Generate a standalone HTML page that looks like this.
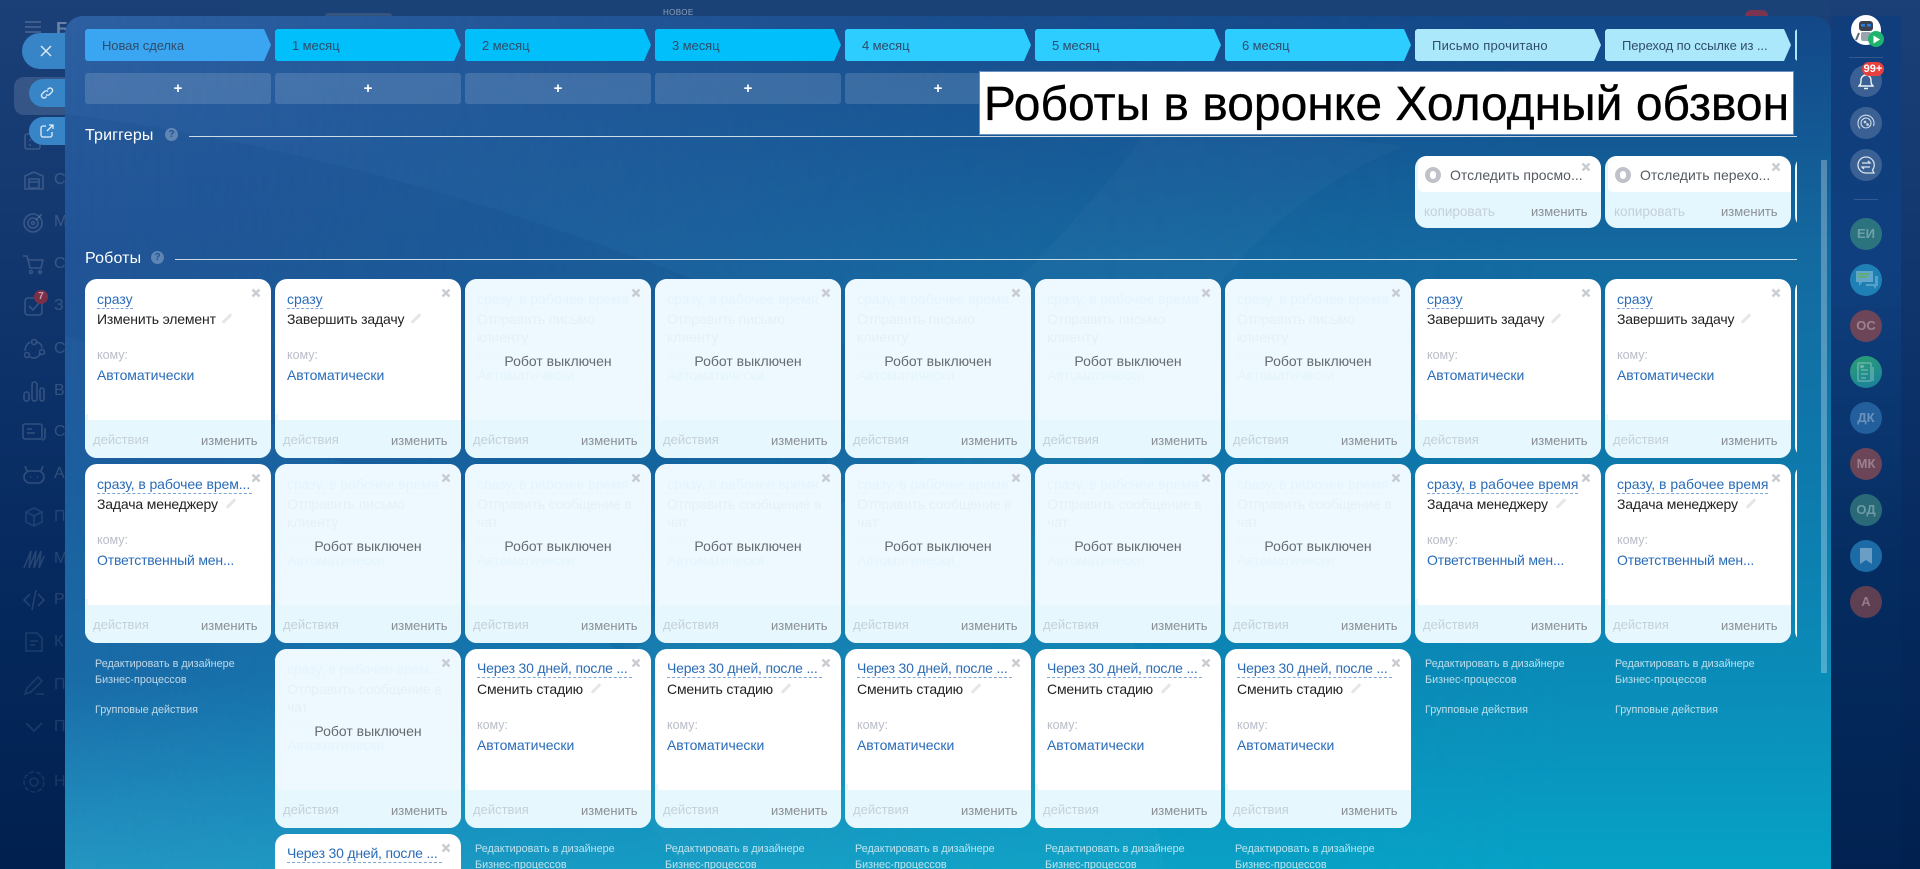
<!DOCTYPE html>
<html lang="ru"><head><meta charset="utf-8"><title>Роботы в воронке</title>
<style>
*{box-sizing:border-box}
html,body{margin:0;padding:0;width:1920px;height:869px;overflow:hidden;background:#0a2a5c;font-family:"Liberation Sans",sans-serif}
.abs,.abs>*{position:absolute}
#bg{left:0;top:0;width:1920px;height:869px;background:linear-gradient(180deg,#1b3f77 0,#153a72 20%,#0a2f66 50%,#04275a 75%,#01204f 100%)}
#rail{left:1831px;top:16px;width:70px;height:853px;background:linear-gradient(180deg,#103e7c 0,#0f3f7e 30%,#052c60 65%,#012251 100%)}
.nt{color:rgba(255,255,255,.16);font-size:16px;left:54px;line-height:20px}
.ni{left:22px;width:24px;height:24px;fill:none;stroke:rgba(255,255,255,.16);stroke-width:1.6}
.pill{background:#3784c6;border-radius:18px 0 0 18px}
#panel{left:65px;top:16px;width:1766px;height:853px;border-radius:18px 18px 0 0;overflow:hidden;background:linear-gradient(180deg,#2d60a2 0,#25589a 28%,#1c5f9f 55%,#1a6ca8 78%,#2088bb 92%,#2596c2 100%)}
#panel .rt{position:absolute;left:0;top:0;width:1766px;height:853px;background:linear-gradient(180deg,#134788 0,#136aa0 28%,#0d7cae 58%,#0a8eb9 80%,#06a2c6 100%);-webkit-mask-image:linear-gradient(90deg,rgba(0,0,0,0) 0,rgba(0,0,0,.75) 50%,#000 85%);mask-image:linear-gradient(90deg,rgba(0,0,0,0) 0,rgba(0,0,0,.75) 50%,#000 85%)}
#panel svg{position:absolute;left:0;top:0}
#clip{left:0;top:0;width:1797px;height:869px;overflow:hidden}
.s{top:29px;width:186px;height:32px;color:#2f4d6b;font-size:13px;line-height:33px;padding-left:17px;white-space:nowrap;clip-path:polygon(2px 0,179px 0,186px 16px,179px 32px,2px 32px,0 30px,0 2px);letter-spacing:-.08px}
.a{background:#3aa6f2}.b{background:#00bffa}.g{background:#2ecdff}.w{background:#ace8fc}
.p{top:73px;width:186px;height:31px;border-radius:3px;background:rgba(255,255,255,.14);color:#fff;font-size:15px;font-weight:bold;line-height:31px;text-align:center}
.h{color:#fff;font-size:16px;line-height:20px;left:85px;letter-spacing:.15px}
.q{width:13px;height:13px;border-radius:50%;background:rgba(255,255,255,.28);color:#1d5596;font-size:10px;font-weight:bold;line-height:13px;text-align:center}
.r{height:1px;left:0;background:rgba(255,255,255,.78)}
.c{position:absolute;width:186px;height:179px;border-radius:12px;background:#fff;overflow:hidden;font-size:14px;white-space:nowrap}
.c>*{position:absolute;line-height:18px}
.t{left:12px;top:11px;color:#2a6cb8;border-bottom:1px dashed #7fa6d6;height:19px}
.tl{width:155px;letter-spacing:-.1px}
.n{left:12px;top:31px;color:#222;letter-spacing:-.16px}
.n2{left:12px;top:49px;color:#222}
.pn{width:12px;height:3px;background:#e6e6e6;transform:rotate(-45deg);top:38px}
.k{left:12px;top:67px;color:#b8bdc8;font-size:12.5px}
.l{left:12px;top:87px;color:#2a6cb8;letter-spacing:-.05px}
.x{left:165px;top:8px;width:12px;height:12px;z-index:3}
.f{left:0;right:0;top:141px;height:38px;background:#e6f7fe;z-index:2}
.f:before{content:"";position:absolute;left:0;top:-6px;width:3px;height:6px;background:#e6f7fe}
.d{position:absolute;left:8px;top:11px;color:#c5d0d8;font-size:13px;line-height:18px}
.e{position:absolute;left:116px;top:12px;color:#8b8f94;font-size:13px;line-height:18px}
.o{left:0;top:0;right:0;bottom:0;background:rgba(236,249,255,.96);z-index:1}
.m{left:0;right:0;top:73px;text-align:center;color:#666b70;z-index:2}
.tr{height:72px;top:156px;background:#e4f6fe}
.tr .in{left:3px;right:0;top:0;height:36px;background:#fff;border-radius:0 0 0 5px}
.tr .ic{left:10px;top:11px;width:16px;height:16px;border-radius:50%;background:#bfc3c9}
.tr .ic:after{content:"";position:absolute;left:5px;top:4px;width:6px;height:8px;border-radius:3px;background:#fff}
.tr .tx{left:35px;top:10px;color:#555b60}
.tr .d{left:9px;top:47px;line-height:18px;font-size:13.5px}
.tr .e{left:116px;top:47px}
.tr .x{top:5px}
.lk{position:absolute;font-size:10.8px;line-height:16px;color:rgba(255,255,255,.72);white-space:nowrap;height:16px;overflow:hidden}
.v{width:32px;height:32px;left:1850px;border-radius:50%;color:rgba(255,255,255,.32);font-size:13px;font-weight:bold;line-height:32px;text-align:center}
#title{left:979px;top:71px;width:815px;height:64px;background:#fff;border:1px solid #6b8fc0;color:#000;font-size:48px;line-height:66px;text-align:center;white-space:nowrap;-webkit-text-stroke:.35px #000;overflow:hidden}
</style></head><body>
<svg width="0" height="0" style="position:absolute"><defs><g id="X"><path d="M2.500 2.500L9.500 9.500M9.500 2.500L2.500 9.500" stroke="#c9cdd2" stroke-width="2.400" fill="none"/></g></defs></svg>
<div class="abs" style="left:0;top:0;width:1920px;height:869px;overflow:hidden">
<div id="bg"></div>
<div style="left:240px;top:0;width:1590px;height:16px;background:#1b4277"></div>
<div style="left:325px;top:13px;width:67px;height:3px;border-radius:3px 3px 0 0;background:#33557f"></div>
<div style="left:663px;top:8px;font-size:8px;line-height:10px;color:#8ca0bb;letter-spacing:.4px">НОВОЕ</div>
<div style="left:1745px;top:10px;width:23px;height:6px;border-radius:7px 7px 0 0;background:#7a3450"></div>
<div id="rail"></div>
<div style="left:14px;top:77px;width:70px;height:38px;border-radius:10px;background:rgba(255,255,255,.13)"></div>
<svg class="ni" style="top:19px;left:25px;width:16px;height:16px;stroke-width:2" viewBox="0 0 16 16"><path d="M0 3H16M0 8H16M0 13H16"/></svg>
<div class="nt" style="top:19px;left:56px;font-weight:bold;font-size:18px;color:rgba(255,255,255,.35)">Б</div>
<svg class="ni" style="top:128px" viewBox="0 0 24 24"><rect x="3" y="6" width="15" height="15" rx="2"/><path d="M7 12h2M7 17h2"/></svg>
<svg class="ni" style="top:168px" viewBox="0 0 24 24"><path d="M3 8l9-4 9 4v13H3zM7 11h10v9H7zM7 14h10"/></svg>
<svg class="ni" style="top:210px" viewBox="0 0 24 24"><circle cx="11" cy="13" r="9"/><circle cx="11" cy="13" r="5"/><circle cx="11" cy="13" r="1.500"/><path d="M14 10l6-6"/></svg>
<svg class="ni" style="top:252px" viewBox="0 0 24 24"><path d="M1 4h4l3 12h11l2-8H6"/><circle cx="9" cy="20" r="1.500"/><circle cx="18" cy="20" r="1.500"/></svg>
<svg class="ni" style="top:294px" viewBox="0 0 24 24"><rect x="3" y="4" width="17" height="17" rx="3"/><path d="M7 12l4 4 6-7"/></svg>
<svg class="ni" style="top:337px" viewBox="0 0 24 24"><circle cx="12" cy="5" r="2.500"/><circle cx="5" cy="18" r="2.500"/><circle cx="20" cy="15" r="2.500"/><path d="M8 5c-3 2-5 5-5 9M8 20c3 2 8 1 10-3M20 11c0-3-2-5-5-6"/></svg>
<svg class="ni" style="top:379px" viewBox="0 0 24 24"><rect x="2" y="13" width="5" height="9" rx="2.500"/><rect x="10" y="3" width="5" height="19" rx="2.500"/><rect x="18" y="9" width="4" height="13" rx="2"/></svg>
<svg class="ni" style="top:420px" viewBox="0 0 24 24"><rect x="1" y="4" width="19" height="15" rx="2"/><path d="M23 8v9a3 3 0 0 1-3 3M5 9h5M5 13h8"/></svg>
<svg class="ni" style="top:462px" viewBox="0 0 24 24"><rect x="2" y="9" width="20" height="12" rx="6"/><path d="M5 9L3 4M19 9l2-5M8 15h1M15 15h1"/></svg>
<svg class="ni" style="top:505px;stroke:rgba(255,255,255,.1)" viewBox="0 0 24 24"><path d="M12 3l8 4v10l-8 4-8-4V7zM4 7l8 4 8-4M12 11v10"/></svg>
<svg class="ni" style="top:547px;stroke:rgba(255,255,255,.13)" viewBox="0 0 24 24"><path d="M2 21L9 4 7 21 14 4l-2 17L19 4l-2 17 5-12"/></svg>
<svg class="ni" style="top:588px;stroke:rgba(255,255,255,.12)" viewBox="0 0 24 24"><path d="M8 6l-6 6 6 6M16 6l6 6-6 6M14 2L10 22"/></svg>
<svg class="ni" style="top:630px;stroke:rgba(255,255,255,.1)" viewBox="0 0 24 24"><path d="M4 3h11l5 5v13H4zM8 11h8M8 15h5"/></svg>
<svg class="ni" style="top:673px;stroke:rgba(255,255,255,.1)" viewBox="0 0 24 24"><path d="M3 21l2-6L16 4l4 4L9 19zM14 21h8"/></svg>
<svg class="ni" style="top:715px;stroke:rgba(255,255,255,.1)" viewBox="0 0 24 24"><path d="M4 8l8 8 8-8"/></svg>
<svg class="ni" style="top:770px;stroke:rgba(255,255,255,.09)" viewBox="0 0 24 24"><circle cx="12" cy="12" r="4"/><circle cx="12" cy="12" r="10" stroke-dasharray="5 2"/></svg>
<div class="nt" style="top:170px">С</div><div class="nt" style="top:212px">М</div><div class="nt" style="top:254px">С</div><div class="nt" style="top:296px">З</div><div class="nt" style="top:339px">С</div><div class="nt" style="top:381px">В</div><div class="nt" style="top:422px">С</div><div class="nt" style="top:464px">А</div><div class="nt" style="top:507px;opacity:.7">П</div><div class="nt" style="top:549px;opacity:.8">М</div><div class="nt" style="top:590px;opacity:.8">Р</div><div class="nt" style="top:632px;opacity:.7">К</div><div class="nt" style="top:675px;opacity:.7">П</div><div class="nt" style="top:717px;opacity:.7">П</div><div class="nt" style="top:772px;opacity:.6">Н</div>
<div style="left:34px;top:290px;width:14px;height:14px;border-radius:50%;background:#7b3048;color:rgba(255,255,255,.55);font-size:10px;font-weight:bold;line-height:14px;text-align:center">7</div>

<div class="pill" style="left:22px;top:33px;width:60px;height:36px"></div>
<svg style="left:40px;top:45px" width="12" height="12" viewBox="0 0 12 12"><path d="M1 1L11 11M11 1L1 11" stroke="#dfeaf5" stroke-width="1.400" fill="none"/></svg>
<div class="pill" style="left:29px;top:79px;width:50px;height:28px"></div>
<svg style="left:40px;top:86px" width="14" height="14" viewBox="0 0 14 14" fill="none" stroke="#e2edf7" stroke-width="1.300"><path d="M6 8.500a2.500 2.500 0 0 0 3.500 0l2.500-2.500a2.500 2.500 0 0 0-3.500-3.500L7.500 3.500M8 5.500a2.500 2.500 0 0 0-3.500 0L2 8a2.500 2.500 0 0 0 3.500 3.500L6.500 10.500"/></svg>
<div class="pill" style="left:29px;top:117px;width:50px;height:28px"></div>
<svg style="left:40px;top:124px" width="14" height="14" viewBox="0 0 14 14" fill="none" stroke="#e2edf7" stroke-width="1.300"><path d="M6 2H3a2 2 0 0 0-2 2v7a2 2 0 0 0 2 2h7a2 2 0 0 0 2-2V8M7 7l6-6M9 1h4v4"/></svg>

<div id="panel">
<div class="rt"></div>
<svg width="1766" height="853" viewBox="0 0 1766 853"><path d="M0 98C250 130 480 200 720 300 800 335 860 375 910 420 760 480 680 560 560 640 400 520 180 370 0 320Z" fill="#0b3f80" opacity=".14"/><path d="M1090 105C1000 230 820 400 720 480 620 570 560 620 500 700L620 853H1100C1060 640 1050 480 1110 340 1160 240 1240 170 1340 130Z" fill="#fff" opacity=".025"/></svg>
<div style="position:absolute;left:1756px;top:144px;width:6px;height:513px;background:rgba(255,255,255,.28)"></div>
</div>

<div id="clip" class="abs">
<div class="s a" style="left:85px">Новая сделка</div>
<div class="s b" style="left:275px">1 месяц</div>
<div class="s b" style="left:465px">2 месяц</div>
<div class="s b" style="left:655px">3 месяц</div>
<div class="s g" style="left:845px">4 месяц</div>
<div class="s g" style="left:1035px">5 месяц</div>
<div class="s g" style="left:1225px">6 месяц</div>
<div class="s w" style="left:1415px;letter-spacing:.22px">Письмо прочитано</div>
<div class="s w" style="left:1605px">Переход по ссылке из ...</div>
<div class="s w" style="left:1795px"></div>
<div class="p" style="left:85px">+</div><div class="p" style="left:275px">+</div><div class="p" style="left:465px">+</div><div class="p" style="left:655px">+</div><div class="p" style="left:845px">+</div>
<div class="h" style="top:126px">Триггеры</div><div class="q" style="left:165px;top:128px">?</div><div class="r" style="left:189px;top:136px;width:1608px"></div>
<div class="h" style="top:249px">Роботы</div><div class="q" style="left:151px;top:251px">?</div><div class="r" style="left:175px;top:259px;width:1622px"></div>
<div id="title">Роботы в воронке Холодный обзвон</div>

<div class="c tr" style="left:1415px"><div class="in"></div><div class="ic"></div><div class="tx">Отследить просмо...</div><svg class="x" viewBox="0 0 12 12"><use href="#X"/></svg><span class="d">копировать</span><span class="e">изменить</span></div>
<div class="c tr" style="left:1605px"><div class="in"></div><div class="ic"></div><div class="tx">Отследить перехо...</div><svg class="x" viewBox="0 0 12 12"><use href="#X"/></svg><span class="d">копировать</span><span class="e">изменить</span></div>
<div class="c tr" style="left:1795px"></div>

<!-- row A -->
<div class="c" style="left:85px;top:279px"><span class="t">сразу</span><span class="n">Изменить элемент</span><i class="pn" style="left:136px"></i><span class="k">кому:</span><span class="l">Автоматически</span><svg class="x" viewBox="0 0 12 12"><use href="#X"/></svg><div class="f"><span class="d">действия</span><span class="e">изменить</span></div></div>
<div class="c" style="left:275px;top:279px"><span class="t">сразу</span><span class="n">Завершить задачу</span><i class="pn" style="left:135px"></i><span class="k">кому:</span><span class="l">Автоматически</span><svg class="x" viewBox="0 0 12 12"><use href="#X"/></svg><div class="f"><span class="d">действия</span><span class="e">изменить</span></div></div>
<div class="c" style="left:465px;top:279px"><span class="t">сразу, в рабочее время</span><span class="n">Отправить письмо</span><span class="n2">клиенту</span><span class="k">кому:</span><span class="l">Автоматически</span><div class="o"></div><span class="m">Робот выключен</span><svg class="x" viewBox="0 0 12 12"><use href="#X"/></svg><div class="f"><span class="d">действия</span><span class="e">изменить</span></div></div>
<div class="c" style="left:655px;top:279px"><span class="t">сразу, в рабочее время</span><span class="n">Отправить письмо</span><span class="n2">клиенту</span><span class="k">кому:</span><span class="l">Автоматически</span><div class="o"></div><span class="m">Робот выключен</span><svg class="x" viewBox="0 0 12 12"><use href="#X"/></svg><div class="f"><span class="d">действия</span><span class="e">изменить</span></div></div>
<div class="c" style="left:845px;top:279px"><span class="t">сразу, в рабочее время</span><span class="n">Отправить письмо</span><span class="n2">клиенту</span><span class="k">кому:</span><span class="l">Автоматически</span><div class="o"></div><span class="m">Робот выключен</span><svg class="x" viewBox="0 0 12 12"><use href="#X"/></svg><div class="f"><span class="d">действия</span><span class="e">изменить</span></div></div>
<div class="c" style="left:1035px;top:279px"><span class="t">сразу, в рабочее время</span><span class="n">Отправить письмо</span><span class="n2">клиенту</span><span class="k">кому:</span><span class="l">Автоматически</span><div class="o"></div><span class="m">Робот выключен</span><svg class="x" viewBox="0 0 12 12"><use href="#X"/></svg><div class="f"><span class="d">действия</span><span class="e">изменить</span></div></div>
<div class="c" style="left:1225px;top:279px"><span class="t">сразу, в рабочее время</span><span class="n">Отправить письмо</span><span class="n2">клиенту</span><span class="k">кому:</span><span class="l">Автоматически</span><div class="o"></div><span class="m">Робот выключен</span><svg class="x" viewBox="0 0 12 12"><use href="#X"/></svg><div class="f"><span class="d">действия</span><span class="e">изменить</span></div></div>
<div class="c" style="left:1415px;top:279px"><span class="t">сразу</span><span class="n">Завершить задачу</span><i class="pn" style="left:135px"></i><span class="k">кому:</span><span class="l">Автоматически</span><svg class="x" viewBox="0 0 12 12"><use href="#X"/></svg><div class="f"><span class="d">действия</span><span class="e">изменить</span></div></div>
<div class="c" style="left:1605px;top:279px"><span class="t">сразу</span><span class="n">Завершить задачу</span><i class="pn" style="left:135px"></i><span class="k">кому:</span><span class="l">Автоматически</span><svg class="x" viewBox="0 0 12 12"><use href="#X"/></svg><div class="f"><span class="d">действия</span><span class="e">изменить</span></div></div>
<div class="c" style="left:1795px;top:279px"></div>

<!-- row B -->
<div class="c" style="left:85px;top:464px"><span class="t tl">сразу, в рабочее врем...</span><span class="n">Задача менеджеру</span><i class="pn" style="left:140px"></i><span class="k">кому:</span><span class="l" style="letter-spacing:-.18px">Ответственный мен...</span><svg class="x" viewBox="0 0 12 12"><use href="#X"/></svg><div class="f"><span class="d">действия</span><span class="e">изменить</span></div></div>
<div class="c" style="left:275px;top:464px"><span class="t">сразу, в рабочее время</span><span class="n">Отправить письмо</span><span class="n2">клиенту</span><span class="k">кому:</span><span class="l">Автоматически</span><div class="o"></div><span class="m">Робот выключен</span><svg class="x" viewBox="0 0 12 12"><use href="#X"/></svg><div class="f"><span class="d">действия</span><span class="e">изменить</span></div></div>
<div class="c" style="left:465px;top:464px"><span class="t">сразу, в рабочее время</span><span class="n">Отправить сообщение в</span><span class="n2">чат</span><span class="k">кому:</span><span class="l">Автоматически</span><div class="o"></div><span class="m">Робот выключен</span><svg class="x" viewBox="0 0 12 12"><use href="#X"/></svg><div class="f"><span class="d">действия</span><span class="e">изменить</span></div></div>
<div class="c" style="left:655px;top:464px"><span class="t">сразу, в рабочее время</span><span class="n">Отправить сообщение в</span><span class="n2">чат</span><span class="k">кому:</span><span class="l">Автоматически</span><div class="o"></div><span class="m">Робот выключен</span><svg class="x" viewBox="0 0 12 12"><use href="#X"/></svg><div class="f"><span class="d">действия</span><span class="e">изменить</span></div></div>
<div class="c" style="left:845px;top:464px"><span class="t">сразу, в рабочее время</span><span class="n">Отправить сообщение в</span><span class="n2">чат</span><span class="k">кому:</span><span class="l">Автоматически</span><div class="o"></div><span class="m">Робот выключен</span><svg class="x" viewBox="0 0 12 12"><use href="#X"/></svg><div class="f"><span class="d">действия</span><span class="e">изменить</span></div></div>
<div class="c" style="left:1035px;top:464px"><span class="t">сразу, в рабочее время</span><span class="n">Отправить сообщение в</span><span class="n2">чат</span><span class="k">кому:</span><span class="l">Автоматически</span><div class="o"></div><span class="m">Робот выключен</span><svg class="x" viewBox="0 0 12 12"><use href="#X"/></svg><div class="f"><span class="d">действия</span><span class="e">изменить</span></div></div>
<div class="c" style="left:1225px;top:464px"><span class="t">сразу, в рабочее время</span><span class="n">Отправить сообщение в</span><span class="n2">чат</span><span class="k">кому:</span><span class="l">Автоматически</span><div class="o"></div><span class="m">Робот выключен</span><svg class="x" viewBox="0 0 12 12"><use href="#X"/></svg><div class="f"><span class="d">действия</span><span class="e">изменить</span></div></div>
<div class="c" style="left:1415px;top:464px"><span class="t">сразу, в рабочее время</span><span class="n">Задача менеджеру</span><i class="pn" style="left:140px"></i><span class="k">кому:</span><span class="l" style="letter-spacing:-.18px">Ответственный мен...</span><svg class="x" viewBox="0 0 12 12"><use href="#X"/></svg><div class="f"><span class="d">действия</span><span class="e">изменить</span></div></div>
<div class="c" style="left:1605px;top:464px"><span class="t">сразу, в рабочее время</span><span class="n">Задача менеджеру</span><i class="pn" style="left:140px"></i><span class="k">кому:</span><span class="l" style="letter-spacing:-.18px">Ответственный мен...</span><svg class="x" viewBox="0 0 12 12"><use href="#X"/></svg><div class="f"><span class="d">действия</span><span class="e">изменить</span></div></div>
<div class="c" style="left:1795px;top:464px"></div>

<!-- row C -->
<div class="lk" style="left:95px;top:656px">Редактировать в дизайнере</div><div class="lk" style="left:95px;top:672px">Бизнес-процессов</div><div class="lk" style="left:95px;top:702px">Групповые действия</div>
<div class="c" style="left:275px;top:649px"><span class="t tl">сразу, в рабочее врем...</span><span class="n">Отправить сообщение в</span><span class="n2">чат</span><span class="k">кому:</span><span class="l">Автоматически</span><div class="o"></div><span class="m">Робот выключен</span><svg class="x" viewBox="0 0 12 12"><use href="#X"/></svg><div class="f"><span class="d">действия</span><span class="e">изменить</span></div></div>
<div class="c" style="left:465px;top:649px"><span class="t tl" style="letter-spacing:-.2px;top:10px">Через 30 дней, после ...</span><span class="n">Сменить стадию</span><i class="pn" style="left:125px"></i><span class="k">кому:</span><span class="l">Автоматически</span><svg class="x" viewBox="0 0 12 12"><use href="#X"/></svg><div class="f"><span class="d">действия</span><span class="e">изменить</span></div></div>
<div class="c" style="left:655px;top:649px"><span class="t tl" style="letter-spacing:-.2px;top:10px">Через 30 дней, после ...</span><span class="n">Сменить стадию</span><i class="pn" style="left:125px"></i><span class="k">кому:</span><span class="l">Автоматически</span><svg class="x" viewBox="0 0 12 12"><use href="#X"/></svg><div class="f"><span class="d">действия</span><span class="e">изменить</span></div></div>
<div class="c" style="left:845px;top:649px"><span class="t tl" style="letter-spacing:-.2px;top:10px">Через 30 дней, после ...</span><span class="n">Сменить стадию</span><i class="pn" style="left:125px"></i><span class="k">кому:</span><span class="l">Автоматически</span><svg class="x" viewBox="0 0 12 12"><use href="#X"/></svg><div class="f"><span class="d">действия</span><span class="e">изменить</span></div></div>
<div class="c" style="left:1035px;top:649px"><span class="t tl" style="letter-spacing:-.2px;top:10px">Через 30 дней, после ...</span><span class="n">Сменить стадию</span><i class="pn" style="left:125px"></i><span class="k">кому:</span><span class="l">Автоматически</span><svg class="x" viewBox="0 0 12 12"><use href="#X"/></svg><div class="f"><span class="d">действия</span><span class="e">изменить</span></div></div>
<div class="c" style="left:1225px;top:649px"><span class="t tl" style="letter-spacing:-.2px;top:10px">Через 30 дней, после ...</span><span class="n">Сменить стадию</span><i class="pn" style="left:125px"></i><span class="k">кому:</span><span class="l">Автоматически</span><svg class="x" viewBox="0 0 12 12"><use href="#X"/></svg><div class="f"><span class="d">действия</span><span class="e">изменить</span></div></div>
<div class="lk" style="left:1425px;top:656px">Редактировать в дизайнере</div><div class="lk" style="left:1425px;top:672px">Бизнес-процессов</div><div class="lk" style="left:1425px;top:702px">Групповые действия</div>
<div class="lk" style="left:1615px;top:656px">Редактировать в дизайнере</div><div class="lk" style="left:1615px;top:672px">Бизнес-процессов</div><div class="lk" style="left:1615px;top:702px">Групповые действия</div>

<!-- row D -->
<div class="c" style="left:275px;top:834px;height:35px;border-radius:12px 12px 0 0"><span class="t tl" style="letter-spacing:-.2px;top:10px">Через 30 дней, после ...</span><svg class="x" viewBox="0 0 12 12"><use href="#X"/></svg></div>
<div class="lk" style="left:475px;top:841px">Редактировать в дизайнере</div><div class="lk" style="left:475px;top:857px;height:12px">Бизнес-процессов</div>
<div class="lk" style="left:665px;top:841px">Редактировать в дизайнере</div><div class="lk" style="left:665px;top:857px;height:12px">Бизнес-процессов</div>
<div class="lk" style="left:855px;top:841px">Редактировать в дизайнере</div><div class="lk" style="left:855px;top:857px;height:12px">Бизнес-процессов</div>
<div class="lk" style="left:1045px;top:841px">Редактировать в дизайнере</div><div class="lk" style="left:1045px;top:857px;height:12px">Бизнес-процессов</div>
<div class="lk" style="left:1235px;top:841px">Редактировать в дизайнере</div><div class="lk" style="left:1235px;top:857px;height:12px">Бизнес-процессов</div>
</div>

<!-- right rail -->
<svg style="left:1851px;top:15px" width="30" height="30" viewBox="0 0 30 30"><circle cx="15" cy="15" r="15" fill="#fff"/><rect x="8" y="6" width="14" height="10" rx="3" fill="#3a4150"/><rect x="10" y="9" width="4" height="2.500" fill="#2b7de0"/><rect x="16" y="9" width="4" height="2.500" fill="#2b7de0"/><rect x="10" y="17" width="10" height="9" rx="2" fill="#9aa3b0"/><path d="M8 18L5 25M22 18l3 7" stroke="#5a6474" stroke-width="2"/></svg>
<div style="left:1868px;top:31px;width:16px;height:16px;border-radius:50%;background:#1fb36d"></div>
<svg style="left:1872px;top:35px" width="9" height="9" viewBox="0 0 9 9"><path d="M1.500 0.500L8 4.500 1.500 8.500Z" fill="#fff"/></svg>
<div style="left:1849px;top:57px;width:34px;height:1px;background:rgba(255,255,255,.15)"></div>
<div class="v" style="top:65px;background:rgba(255,255,255,.18)"></div>
<svg style="left:1858px;top:73px" width="16" height="17" viewBox="0 0 16 17" fill="none" stroke="#eef3f9" stroke-width="1.400"><path d="M1 13c2-2 2-3 2-6a5 5 0 0 1 10 0c0 3 0 4 2 6zM6 15.500h4"/></svg>
<div style="left:1862px;top:62px;width:22px;height:14px;border-radius:7px;background:#e8403f;color:#fff;font-size:11px;font-weight:bold;line-height:14px;text-align:center">99+</div>
<div class="v" style="top:107px;background:rgba(255,255,255,.18)"></div>
<svg style="left:1857px;top:114px" width="18" height="18" viewBox="0 0 18 18" fill="none" stroke="#cfdbe8" stroke-width="1.100"><circle cx="9" cy="9" r="5"/><path d="M3 14.500A8 8 0 1 1 16.500 12M5.500 6A4 4 0 0 1 9 4"/><circle cx="8" cy="8" r=".8"/><circle cx="10.500" cy="10.500" r=".8"/></svg>
<div class="v" style="top:149px;background:rgba(255,255,255,.18)"></div>
<svg style="left:1857px;top:156px" width="18" height="18" viewBox="0 0 18 18" fill="none" stroke="#dbe5ef" stroke-width="1.300"><path d="M9 1a8 8 0 1 0 0 16h8l-1.500-3A8 8 0 0 0 9 1zM5 7h8l-2-2M13 11H5l2 2"/></svg>
<div style="left:1854px;top:199px;width:24px;height:1px;background:rgba(255,255,255,.15)"></div>
<div class="v" style="top:218px;background:#2c7380">ЕИ</div>
<div class="v" style="top:264px;background:#1f80b6"></div>
<svg style="left:1855px;top:270px" width="24" height="20" viewBox="0 0 24 20"><path d="M1 1h17v11H7l-3 4v-4H1z" fill="rgba(255,255,255,.3)"/><path d="M20 6h3v10h-2v3l-3-3h-7v-2h9z" fill="rgba(255,255,255,.25)"/><path d="M3 4h12M3 7h9" stroke="#5fae45" stroke-width="1.300"/></svg>
<div class="v" style="top:310px;background:#6c4559">ОС</div>
<div class="v" style="top:356px;background:linear-gradient(160deg,#2b9f72,#1a7fa0)"></div>
<svg style="left:1857px;top:362px" width="18" height="20" viewBox="0 0 18 20" fill="none" stroke="rgba(255,255,255,.3)" stroke-width="1.500"><rect x="1" y="1" width="13" height="18" rx="1"/><path d="M4 8h7M4 12h7M4 16h5M16 5v14"/><rect x="3.500" y="3.500" width="3" height="2" fill="#fff" opacity=".4"/></svg>
<div class="v" style="top:402px;background:#235f9d">ДК</div>
<div class="v" style="top:448px;background:#6c4559">МК</div>
<div class="v" style="top:494px;background:#2a6a78">ОД</div>
<div class="v" style="top:540px;background:#1c6ba6"></div>
<svg style="left:1860px;top:548px" width="12" height="16" viewBox="0 0 12 16"><path d="M0 1a1 1 0 0 1 1-1h10a1 1 0 0 1 1 1v15l-6-4-6 4z" fill="rgba(255,255,255,.35)"/></svg>
<div class="v" style="top:586px;background:#5f3f52">А</div>
</div>
</body></html>
